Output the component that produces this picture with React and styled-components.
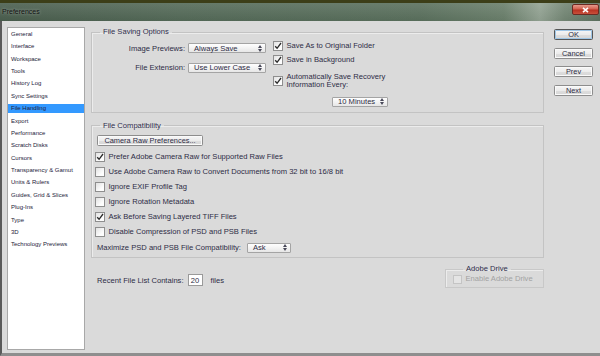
import React from 'react';
import styled, { createGlobalStyle } from 'styled-components';

const Global = createGlobalStyle`
  html, body { margin: 0; padding: 0; background: #dadada; }
  body { font-family: "Liberation Sans", Arial, sans-serif; overflow: hidden; color: #2d2c45; }
  * { box-sizing: border-box; }
`;

const Window = styled.div`
  width: 600px;
  height: 356px;
  display: flex;
  flex-direction: column;
  border-top: 3px solid #3c3e18;
  background: #dadada;
`;

const TitleBar = styled.div`
  height: 18px;
  flex: none;
  display: flex;
  align-items: flex-start;
  justify-content: space-between;
  padding: 0 1px 0 2px;
  background:
    linear-gradient(180deg, rgba(255,255,255,0.10), rgba(0,0,0,0.04)),
    linear-gradient(90deg, #4a5e4e 0%, #546a58 30%, #5a705d 70%, #6a7f6b 84%, #93a393 90%, #748775 94%, #5d715f 100%);
`;

const Title = styled.span`
  font-size: 7px;
  line-height: 18px;
  color: #111;
  text-shadow: 0 0 3px rgba(255,255,255,0.5);
`;

const CloseButton = styled.div`
  margin-top: 1px;
  width: 27px;
  height: 11px;
  border-radius: 2px;
  border: 1px solid #6b2a22;
  background: linear-gradient(180deg, #e49a8c 0%, #d2614f 45%, #b83222 55%, #c9503b 100%);
  display: flex;
  align-items: center;
  justify-content: center;
`;

const Body = styled.div`
  flex: 1;
  display: flex;
  align-items: stretch;
  padding: 6px 7px 3px 5px;
  border-left: 2px solid #5a5a5a;
  border-bottom: 3px solid #8e8e8e;
  gap: 6px;
  min-height: 0;
`;

const Sidebar = styled.ul`
  list-style: none;
  margin: 0;
  width: 78px;
  flex: none;
  background: #fff;
  border: 1px solid #a8a8a8;
  padding: 1.8px 0 0;
  display: flex;
  flex-direction: column;
  gap: 3.4px;
`;

const NavItem = styled.li`
  height: 9px;
  line-height: 9px;
  font-size: 6px;
  padding-left: 3px;
  white-space: nowrap;
  color: #23223a;
  background: ${p => (p.$active ? '#3399ff' : 'transparent')};
`;

const Main = styled.div`
  width: 453px;
  flex: none;
  display: flex;
  flex-direction: column;
`;

const Group = styled.fieldset`
  margin: 0;
  min-inline-size: 0;
  border: 1px solid #c3c3c3;
  box-shadow: inset 1px 1px 0 #ececec;
  padding: ${p => p.$pad || '0'};
`;

const Legend = styled.legend`
  font-size: 7.6px;
  line-height: 10px;
  padding: 0 3px;
  margin-left: ${p => p.$indent || 8}px;
  color: #2f2e4c;
`;

const SavingLayout = styled.div`
  display: flex;
  align-items: flex-start;
  gap: 7px;
`;

const FieldGrid = styled.div`
  margin-top: 2px;
  display: grid;
  grid-template-columns: 93px 78px;
  column-gap: 3px;
  row-gap: 9.7px;
  align-items: center;
`;

const FieldLabel = styled.span`
  font-size: 7.6px;
  text-align: right;
  white-space: nowrap;
`;

const SelectBox = styled.div`
  width: ${p => p.$w}px;
  height: ${p => p.$h || 10}px;
  border: 1px solid #a4a4a4;
  border-radius: 1px;
  background: linear-gradient(180deg, #fefefe 0%, #f3f3f3 50%, #e6e6e6 100%);
  display: flex;
  align-items: center;
  justify-content: space-between;
  padding: 0 3px 0 5px;
  font-size: 7.6px;
  color: #2d2c45;
  white-space: nowrap;
  margin-left: ${p => p.$ml || 0}px;
`;

const RightColumn = styled.div`
  display: flex;
  flex-direction: column;
  align-items: flex-start;
`;

const CheckRow = styled.label`
  display: flex;
  align-items: center;
  gap: 3.5px;
  font-size: 7.6px;
  line-height: 8.3px;
  white-space: nowrap;
  margin-top: ${p => p.$mt || 0}px;
  color: ${p => (p.$disabled ? '#a2a2a2' : '#2d2c45')};
`;

const Box = styled.span`
  width: ${p => p.$size || 10}px;
  height: ${p => p.$size || 10}px;
  flex: none;
  border: 1px solid ${p => (p.$disabled ? '#c4c4c4' : '#8e8e8e')};
  background: ${p => (p.$disabled ? '#e4e4e4' : 'linear-gradient(135deg, #e2e2e2 0%, #fdfdfd 70%)')};
  display: flex;
  align-items: center;
  justify-content: center;
`;

const TwoLine = styled.span`
  display: block;
  white-space: normal;
  line-height: 8.3px;
`;

const CompatBody = styled.div`
  display: flex;
  flex-direction: column;
  align-items: flex-start;
`;

const Button = styled.div`
  height: ${p => p.$h || 11}px;
  width: ${p => (p.$w ? `${p.$w}px` : '100%')};
  border: 1px solid ${p => (p.$default ? '#555' : '#8d8d8d')};
  box-shadow: ${p => (p.$default ? 'inset 0 0 0 1px #9fc6e6' : 'inset 0 0 0 1px #fafafa')};
  border-radius: 1.5px;
  background: linear-gradient(180deg, #f6f6f6 0%, #ececec 50%, #dedede 51%, #d6d6d6 100%);
  display: flex;
  align-items: center;
  justify-content: center;
  font-size: 7.4px;
  color: #2d2c45;
  white-space: nowrap;
  margin-left: ${p => p.$ml || 0}px;
`;

const SelectRow = styled.div`
  display: flex;
  align-items: center;
  gap: 6px;
  margin: 5.6px 0 0 2px;
  font-size: 7.6px;
  white-space: nowrap;
`;

const BottomRow = styled.div`
  display: flex;
  justify-content: space-between;
  align-items: flex-start;
  margin-top: 6.5px;
`;

const RecentRow = styled.div`
  display: flex;
  align-items: center;
  gap: 0;
  margin: 10px 0 0 6px;
  font-size: 7.6px;
  white-space: nowrap;
`;

const NumberInput = styled.div`
  width: 15px;
  height: 12px;
  margin: 0 8px 0 4px;
  border: 1px solid #9a9a9a;
  background: #fff;
  display: flex;
  align-items: center;
  justify-content: center;
  font-size: 7.6px;
`;

const DriveGroup = styled(Group)`
  width: 99px;
  padding: 1px 0 3px 7px;
  border-color: #c8c8c8;
`;

const ButtonColumn = styled.div`
  width: 39px;
  flex: none;
  margin-left: 4px;
  padding-top: 2px;
  display: flex;
  flex-direction: column;
  gap: 7.6px;
`;

const Arrows = () => (
  <svg width="4" height="7" viewBox="0 0 4 7">
    <path d="M0 3 L2 0 L4 3Z M0 4 L2 7 L4 4Z" fill="#4a4a5a" />
  </svg>
);

const Check = ({ checked, disabled, size }) => (
  <Box $disabled={disabled} $size={size}>
    {checked && (
      <svg width="8" height="8" viewBox="0 0 8 8">
        <path d="M1.2 4.2 L3.1 6.3 L7 1" stroke="#2b2b2b" strokeWidth="1.3" fill="none" />
      </svg>
    )}
  </Box>
);

const Select = ({ value, w, ml }) => (
  <SelectBox $w={w} $ml={ml}>
    <span>{value}</span>
    <Arrows />
  </SelectBox>
);

const navItems = [
  'General', 'Interface', 'Workspace', 'Tools', 'History Log', 'Sync Settings',
  'File Handling', 'Export', 'Performance', 'Scratch Disks', 'Cursors',
  'Transparency & Gamut', 'Units & Rulers', 'Guides, Grid & Slices', 'Plug-Ins',
  'Type', '3D', 'Technology Previews',
];

const compatOptions = [
  ['Prefer Adobe Camera Raw for Supported Raw Files', true],
  ['Use Adobe Camera Raw to Convert Documents from 32 bit to 16/8 bit', false],
  ['Ignore EXIF Profile Tag', false],
  ['Ignore Rotation Metadata', false],
  ['Ask Before Saving Layered TIFF Files', true],
  ['Disable Compression of PSD and PSB Files', false],
];

export default function App() {
  return (
    <>
      <Global />
      <Window>
        <TitleBar>
          <Title>Preferences</Title>
          <CloseButton>
            <svg width="7" height="6" viewBox="0 0 7 6">
              <path d="M1 0.8 L6 5.2 M6 0.8 L1 5.2" stroke="#fff" strokeWidth="1.6" />
            </svg>
          </CloseButton>
        </TitleBar>
        <Body>
          <Sidebar>
            {navItems.map(item => (
              <NavItem key={item} $active={item === 'File Handling'}>{item}</NavItem>
            ))}
          </Sidebar>
          <Main>
            <Group $pad="4px 0 5px 0">
              <Legend>File Saving Options</Legend>
              <SavingLayout>
                <FieldGrid>
                  <FieldLabel>Image Previews:</FieldLabel>
                  <Select value="Always Save" w={78} />
                  <FieldLabel>File Extension:</FieldLabel>
                  <Select value="Use Lower Case" w={78} />
                </FieldGrid>
                <RightColumn>
                  <CheckRow><Check checked />Save As to Original Folder</CheckRow>
                  <CheckRow $mt={4}><Check checked />Save in Background</CheckRow>
                  <CheckRow $mt={7.5}>
                    <Check checked />
                    <TwoLine>Automatically Save Recovery<br />Information Every:</TwoLine>
                  </CheckRow>
                  <CompatBody style={{ marginTop: 7.8 }}>
                    <Select value="10 Minutes" w={56} ml={59} />
                  </CompatBody>
                </RightColumn>
              </SavingLayout>
            </Group>

            <Group $pad="4px 0 4px 3px" style={{ marginTop: 8 }}>
              <Legend $indent={5}>File Compatibility</Legend>
              <CompatBody>
                <Button $w={106} $ml={2}>Camera Raw Preferences...</Button>
                {compatOptions.map(([label, checked], i) => (
                  <CheckRow key={label} $mt={i === 0 ? 6.6 : 4.9}>
                    <Check checked={checked} />{label}
                  </CheckRow>
                ))}
                <SelectRow>
                  Maximize PSD and PSB File Compatibility:
                  <Select value="Ask" w={44} />
                </SelectRow>
              </CompatBody>
            </Group>

            <BottomRow>
              <RecentRow>
                Recent File List Contains:
                <NumberInput>20</NumberInput>
                files
              </RecentRow>
              <DriveGroup>
                <Legend $indent={10}>Adobe Drive</Legend>
                <CheckRow $disabled>
                  <Check disabled size={9} />Enable Adobe Drive
                </CheckRow>
              </DriveGroup>
            </BottomRow>
          </Main>
          <ButtonColumn>
            <Button $default>OK</Button>
            <Button>Cancel</Button>
            <Button>Prev</Button>
            <Button>Next</Button>
          </ButtonColumn>
        </Body>
      </Window>
    </>
  );
}
